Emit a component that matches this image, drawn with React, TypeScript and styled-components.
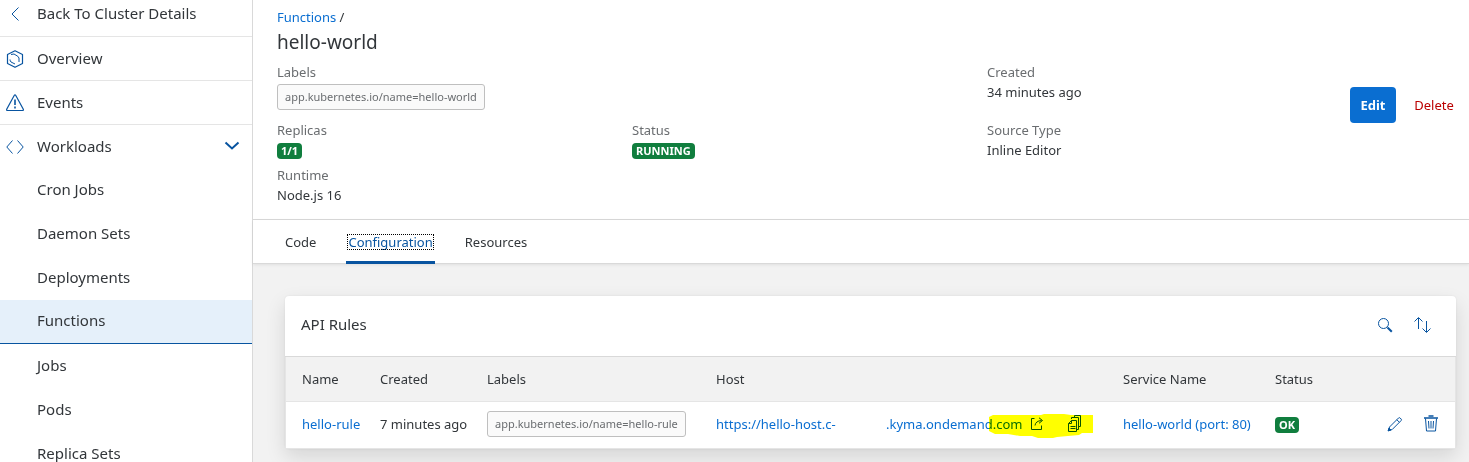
import React from "react";
import styled, { createGlobalStyle, css } from "styled-components";

const color = {
  text: "#32363a",
  label: "#6a6d70",
  link: "#0a6ed1",
  icon: "#0854a0",
  border: "#d9d9d9",
  success: "#107e3e",
};

const GlobalStyle = createGlobalStyle`
  * { box-sizing: border-box; }
  body {
    margin: 0;
    background: #f2f2f2;
    color: ${color.text};
    font: 13px/20px "Noto Sans", "Open Sans", sans-serif;
  }
  button { font: inherit; color: inherit; background: none; border: 0; padding: 0; cursor: pointer; }
  a { text-decoration: none; color: ${color.link}; }
  svg { display: block; fill: none; stroke: currentColor; }
`;

const Shell = styled.div`
  display: flex;
  height: 100vh;
  overflow: hidden;
`;

const Sidebar = styled.nav`
  flex: 0 0 253px;
  overflow: hidden;
  background: #fff;
  border-right: 1px solid ${color.border};
  font-size: 15px;
`;

const NavList = styled.ul`
  list-style: none;
  margin: 0;
  padding: 0;
`;

const NavLink = styled.a<{ $divided?: boolean; $nested?: boolean; $selected?: boolean; $first?: boolean; $group?: boolean }>`
  display: flex;
  align-items: center;
  height: ${(p) => (p.$group ? "43px" : "44px")};
  padding: 0 12px 0 ${(p) => (p.$nested ? "37px" : "6px")};
  color: ${color.text};
  ${(p) => p.$divided && css`border-bottom: 1px solid #e5e5e5;`}
  ${(p) => p.$first && css`height: 37px; padding-bottom: 8px;`}
  ${(p) =>
    p.$selected &&
    css`
      padding-bottom: 1px;
      background: #e5f0fa;
      border-bottom: 1px solid ${color.icon};
    `}
`;

const NavText = styled.span`
  padding-bottom: 2px;
`;

const NavIcon = styled.span`
  width: 18px;
  margin-right: 13px;
  color: ${color.icon};
`;

const NavArrow = styled.span`
  margin-left: auto;
  padding-bottom: 2px;
  color: ${color.icon};
`;

const Main = styled.main`
  flex: 1;
  min-width: 0;
`;

const Header = styled.header`
  padding: 7px 5px 14px 24px;
  background: #fff;
  border-bottom: 1px solid ${color.border};
`;

const Breadcrumb = styled.div`
  height: 21px;
`;

const Title = styled.h1`
  margin: 0 0 6px;
  font-size: 19px;
  font-weight: 400;
  line-height: 28px;
`;

const HeaderBody = styled.div`
  display: flex;
  gap: 8px;
`;

const Fields = styled.dl`
  flex: 1;
  display: grid;
  grid-template-columns: repeat(3, 1fr);
  row-gap: 5px;
  margin: 0;
`;

const Field = styled.div<{ $column: number }>`
  grid-column: ${(p) => p.$column};
`;

const FieldLabel = styled.dt`
  color: ${color.label};
`;

const FieldValue = styled.dd<{ $chip?: boolean }>`
  display: flex;
  align-items: center;
  min-height: 20px;
  margin: 0;
  ${(p) => p.$chip && css`padding: 2px 0 5px;`}
`;

const Chip = styled.span`
  display: inline-block;
  height: 26px;
  padding: 0 7px;
  border: 1px solid #bfbfbf;
  border-radius: 3px;
  background: #fafafa;
  color: ${color.label};
  font-size: 11px;
  line-height: 24px;
  white-space: nowrap;
`;

const Badge = styled.span`
  display: inline-block;
  height: 16px;
  margin-top: 2px;
  padding: 0 4px;
  border-radius: 4px;
  background: ${color.success};
  color: #fff;
  font-size: 11px;
  font-weight: 700;
  line-height: 16px;
`;

const Actions = styled.div`
  display: flex;
  align-items: flex-start;
  gap: 8px;
  padding-top: 25px;
`;

const ActionButton = styled.button<{ $primary?: boolean }>`
  height: 36px;
  min-width: ${(p) => (p.$primary ? "46px" : "60px")};
  border-radius: 4px;
  color: ${(p) => (p.$primary ? "#fff" : "#bb0000")};
  background: ${(p) => (p.$primary ? color.link : "transparent")};
  font-weight: ${(p) => (p.$primary ? 700 : 400)};
`;

const TabBar = styled.div`
  display: flex;
  gap: 28px;
  height: 44px;
  padding: 0 30px;
  background: #fff;
  border-bottom: 1px solid ${color.border};
  box-shadow: 0 1px 3px rgba(0, 0, 0, 0.08);
`;

const TabButton = styled.button<{ $active?: boolean }>`
  height: 44px;
  padding: 2px 2px 0;
  border-bottom: 3px solid ${(p) => (p.$active ? color.icon : "transparent")};
  border-radius: 2px 2px 0 0;
  ${(p) => p.$active && css`color: ${color.icon};`}
`;

const TabText = styled.span<{ $active?: boolean }>`
  display: block;
  line-height: 14px;
  ${(p) => p.$active && css`outline: 1px dotted #000;`}
`;

const Card = styled.section`
  margin: 32px 13px 14px 32px;
  border-radius: 4px;
  background: #fff;
  box-shadow: 0 0 2px rgba(0, 0, 0, 0.08), 0 8px 20px rgba(0, 0, 0, 0.12);
`;

const CardHeader = styled.div`
  display: flex;
  align-items: center;
  gap: 20px;
  height: 61px;
  padding: 0 25px 2px 16px;
  border-bottom: 1px solid ${color.border};
`;

const CardTitle = styled.h2`
  flex: 1;
  margin: 0;
  padding-bottom: 2px;
  font-size: 15px;
  font-weight: 400;
`;

const IconButton = styled.button`
  display: inline-flex;
  color: ${color.icon};
`;

const Table = styled.table`
  width: 100%;
  table-layout: fixed;
  border: solid #e5e5e5;
  border-width: 0 1px 1px;
  border-spacing: 0;
  text-align: left;
  white-space: nowrap;
`;

const HeadCell = styled.th<{ $width?: number }>`
  width: ${(p) => (p.$width ? `${p.$width}px` : "auto")};
  height: 45px;
  padding: 0 0 0 16px;
  background: #f2f2f2;
  border-bottom: 1px solid #e5e5e5;
  font-weight: 400;
`;

const Cell = styled.td`
  position: relative;
  height: 46px;
  padding: 0 0 3px 16px;
`;

const CellRow = styled.div<{ $end?: boolean }>`
  display: flex;
  align-items: center;
  ${(p) => p.$end && css`justify-content: flex-end; gap: 20px; padding-right: 16px;`}
`;

const HostLink = styled.a`
  display: grid;
  grid-template-columns: 170px 144px;
`;

const HostIcons = styled.span`
  display: flex;
  align-items: center;
  gap: 22px;
`;

const Highlight = styled.svg`
  position: absolute;
  left: 289px;
  top: 12px;
  mix-blend-mode: multiply;
  pointer-events: none;
`;

const BackIcon = () => (
  <svg width="18" height="18" aria-hidden="true"><path d="M12.500 2.500 6 9l6.500 6.500" /></svg>
);
const OverviewIcon = () => (
  <svg width="18" height="18" aria-hidden="true">
    <path d="M9 .8 16.500 4.500v9L9 17.300 1.500 13.500v-9z" strokeWidth="1.200" strokeLinejoin="round" />
    <path d="M5 4.500 8 4q5 2.500 5 4v4M4 9.500q0 1.500 1 2.500l4 2" />
  </svg>
);
const EventsIcon = () => (
  <svg width="18" height="18" aria-hidden="true">
    <path d="M8.200 1.500Q9 .2 9.800 1.500L17.300 15.200Q17.700 16.500 16.500 16.500H1.500Q.3 16.500.7 15.200z" strokeWidth="1.200" />
    <path d="M9 5.500v5.500M9 12.500v2" strokeWidth="1.600" />
  </svg>
);
const CodeIcon = () => (
  <svg width="18" height="18" aria-hidden="true"><path d="M6.500 2.500.8 9l5.700 6.500M11.500 2.500 17.200 9l-5.700 6.500" /></svg>
);
const ChevronIcon = () => (
  <svg width="16" height="10" aria-hidden="true"><path d="m1.500 1.500 6.500 6 6.500-6" strokeWidth="2" /></svg>
);
const SearchIcon = () => (
  <svg width="16" height="16" aria-hidden="true">
    <circle cx="6.500" cy="6.500" r="5" />
    <path d="m10.500 10.500 4.300 4.300" strokeWidth="2" />
  </svg>
);
const SortIcon = () => (
  <svg width="18" height="18" aria-hidden="true">
    <path d="M5.500 13V2M1.500 5.500l4-4 4 4M13.500 5v11M9.500 12.500l4 4 4-4" />
  </svg>
);
const ShareIcon = () => (
  <svg width="15" height="14" aria-hidden="true">
    <path d="M4.500 1.500h-3v11h10v-4M5 8.500Q5.500 4 11.500 3.500M9 .8l3.500 2.700L9 6.300" />
  </svg>
);
const CopyIcon = () => (
  <svg width="16" height="18" aria-hidden="true">
    <path d="M4.500 5.500h5v11h-8v-8zM4.500 5.500v3h-3M3.500 11.500h5M3.500 13.500h5" />
    <path d="M4.500 4v-1.500h7v12h-1.500M7.500 2.500v-2h6v11h-1.500" />
  </svg>
);
const EditIcon = () => (
  <svg width="16" height="16" aria-hidden="true">
    <path d="m1.500 14.500 1-3.500 9-9q.8-.8 1.600 0l1 1q.8.800 0 1.600l-9 9zM9.800 3.700l2.600 2.600" />
    <path d="m1 15 1-3 2 2z" fill="currentColor" />
  </svg>
);
const TrashIcon = () => (
  <svg width="16" height="17" aria-hidden="true">
    <path d="M1 3h14M5.500 1h5" strokeWidth="1.400" />
    <path d="m2.500 3.500 1 12.500h9l1-12.500M5.500 6l.5 7.500M8 6v7.500M10.500 6l-.5 7.500" />
  </svg>
);

const topItems = [
  { name: "Back To Cluster Details", Icon: BackIcon },
  { name: "Overview", Icon: OverviewIcon },
  { name: "Events", Icon: EventsIcon },
];
const workloads = ["Cron Jobs", "Daemon Sets", "Deployments", "Functions", "Jobs", "Pods", "Replica Sets"];
const tabs = ["Code", "Configuration", "Resources"];

export default function App() {
  return (
    <Shell>
      <GlobalStyle />
      <Sidebar>
        <NavList>
          {topItems.map(({ name, Icon }, i) => (
            <li key={name}>
              <NavLink href="#" $divided $first={i === 0}>
                <NavIcon><Icon /></NavIcon>
                <NavText>{name}</NavText>
              </NavLink>
            </li>
          ))}
          <li>
            <NavLink href="#" $group>
              <NavIcon><CodeIcon /></NavIcon>
              <NavText>Workloads</NavText>
              <NavArrow><ChevronIcon /></NavArrow>
            </NavLink>
            <NavList>
              {workloads.map((name) => (
                <li key={name}>
                  <NavLink href="#" $nested $selected={name === "Functions"}>
                    <NavText>{name}</NavText>
                  </NavLink>
                </li>
              ))}
            </NavList>
          </li>
        </NavList>
      </Sidebar>
      <Main>
        <Header>
          <Breadcrumb><a href="#">Functions</a> /</Breadcrumb>
          <Title>hello-world</Title>
          <HeaderBody>
            <Fields>
              <Field $column={1}>
                <FieldLabel>Labels</FieldLabel>
                <FieldValue $chip><Chip>app.kubernetes.io/name=hello-world</Chip></FieldValue>
              </Field>
              <Field $column={3}>
                <FieldLabel>Created</FieldLabel>
                <FieldValue>34 minutes ago</FieldValue>
              </Field>
              <Field $column={1}>
                <FieldLabel>Replicas</FieldLabel>
                <FieldValue><Badge>1/1</Badge></FieldValue>
              </Field>
              <Field $column={2}>
                <FieldLabel>Status</FieldLabel>
                <FieldValue><Badge>RUNNING</Badge></FieldValue>
              </Field>
              <Field $column={3}>
                <FieldLabel>Source Type</FieldLabel>
                <FieldValue>Inline Editor</FieldValue>
              </Field>
              <Field $column={1}>
                <FieldLabel>Runtime</FieldLabel>
                <FieldValue>Node.js 16</FieldValue>
              </Field>
            </Fields>
            <Actions>
              <ActionButton $primary>Edit</ActionButton>
              <ActionButton>Delete</ActionButton>
            </Actions>
          </HeaderBody>
        </Header>
        <TabBar role="tablist">
          {tabs.map((tab) => {
            const active = tab === "Configuration";
            return (
              <TabButton key={tab} role="tab" aria-selected={active} $active={active}>
                <TabText $active={active}>{tab}</TabText>
              </TabButton>
            );
          })}
        </TabBar>
        <Card>
          <CardHeader>
            <CardTitle>API Rules</CardTitle>
            <IconButton aria-label="Search"><SearchIcon /></IconButton>
            <IconButton aria-label="Sort"><SortIcon /></IconButton>
          </CardHeader>
          <Table>
            <thead>
              <tr>
                <HeadCell $width={78}>Name</HeadCell>
                <HeadCell $width={107}>Created</HeadCell>
                <HeadCell $width={229}>Labels</HeadCell>
                <HeadCell>Host</HeadCell>
                <HeadCell $width={152}>Service Name</HeadCell>
                <HeadCell $width={80}>Status</HeadCell>
                <HeadCell $width={116} aria-label="Actions" />
              </tr>
            </thead>
            <tbody>
              <tr>
                <Cell><a href="#">hello-rule</a></Cell>
                <Cell>7 minutes ago</Cell>
                <Cell><CellRow><Chip>app.kubernetes.io/name=hello-rule</Chip></CellRow></Cell>
                <Cell>
                  <CellRow>
                    <HostLink href="#"><span>https://hello-host.c-</span><span>.kyma.ondemand.com</span></HostLink>
                    <HostIcons>
                      <IconButton aria-label="Open host"><ShareIcon /></IconButton>
                      <IconButton aria-label="Copy host"><CopyIcon /></IconButton>
                    </HostIcons>
                  </CellRow>
                  <Highlight width="104" height="26" aria-hidden="true">
                    <path
                      d="M0 3 4 1h48l3-1h20l7 1h22v18h-11l-3 2-22 2-4 1H49l-6-2H31l-12-2H6l-6-3z"
                      fill="#ffff00"
                      stroke="none"
                    />
                  </Highlight>
                </Cell>
                <Cell><a href="#">hello-world (port: 80)</a></Cell>
                <Cell><CellRow><Badge>OK</Badge></CellRow></Cell>
                <Cell>
                  <CellRow $end>
                    <IconButton aria-label="Edit rule"><EditIcon /></IconButton>
                    <IconButton aria-label="Delete rule"><TrashIcon /></IconButton>
                  </CellRow>
                </Cell>
              </tr>
            </tbody>
          </Table>
        </Card>
      </Main>
    </Shell>
  );
}
